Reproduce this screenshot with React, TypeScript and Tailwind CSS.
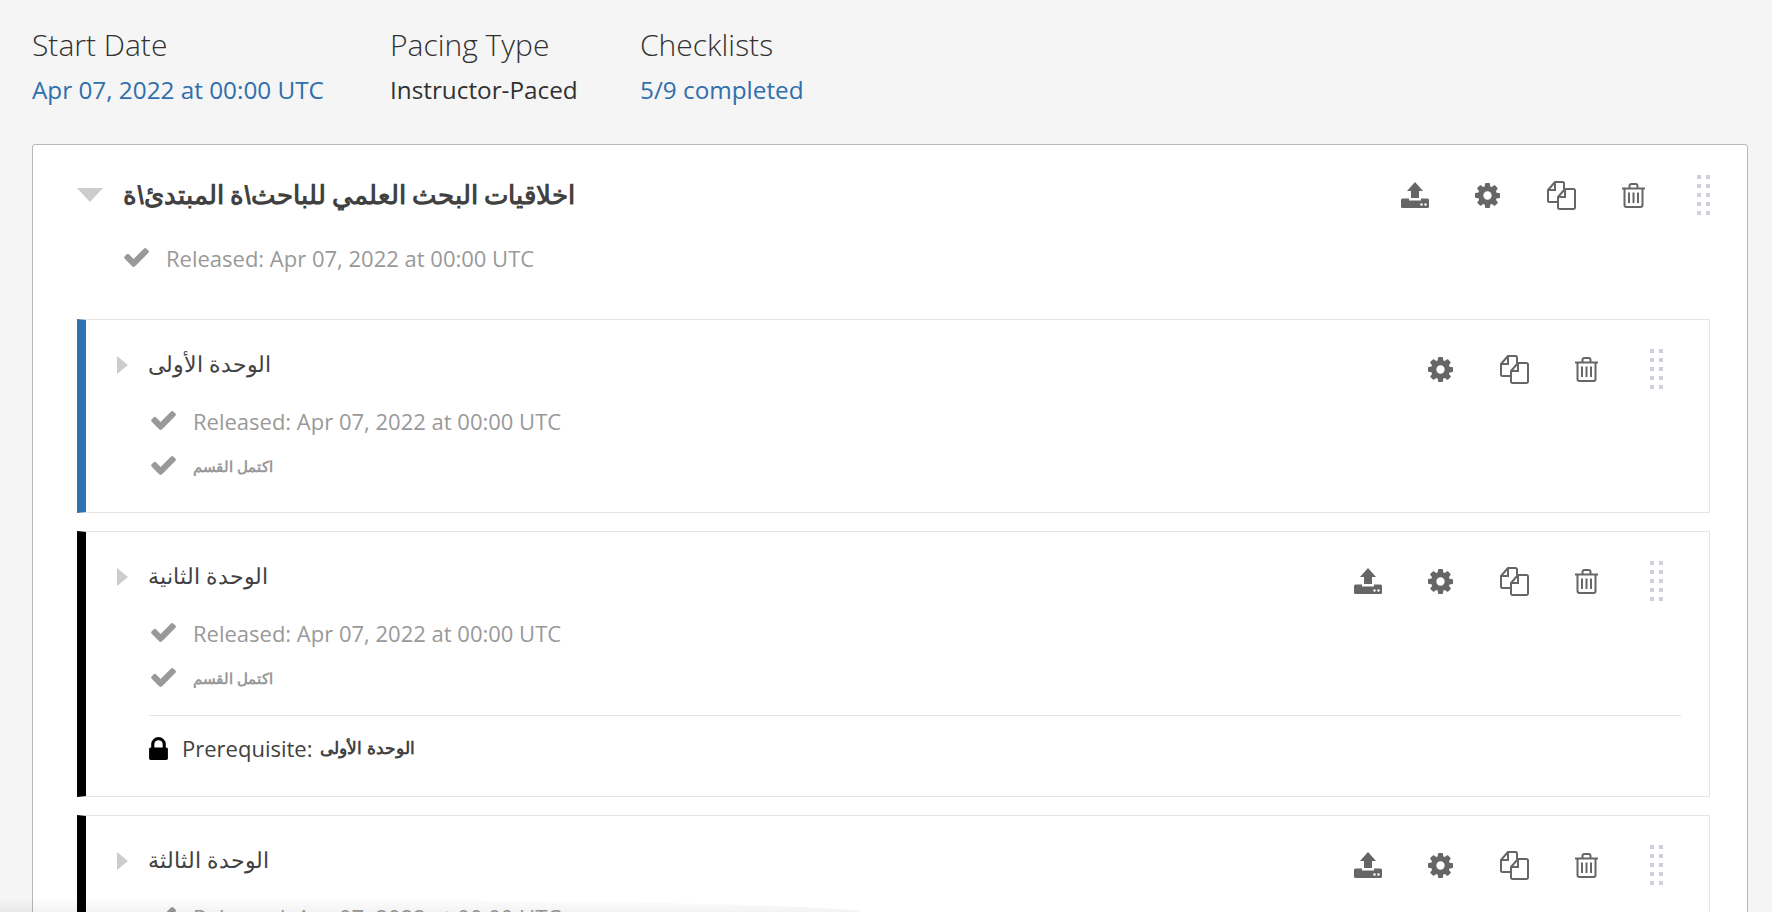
import React from "react";

const arabic = "font-['Liberation_Sans',sans-serif]";

const UploadIcon = () => (
  <svg viewBox="0 0 28 26" className="h-[26px] w-[28px] fill-[#666]">
    <path d="M14 0 L22 9 H18 V16 H10 V9 H6 Z" />
    <path d="M1.5 16.5 H8 V18.5 H20 V16.5 H26.5 A1.5 1.5 0 0 1 28 18 V24.5 A1.5 1.5 0 0 1 26.5 26 H1.5 A1.5 1.5 0 0 1 0 24.5 V18 A1.5 1.5 0 0 1 1.5 16.5 Z" />
    <circle cx="20.5" cy="22.5" r="1.2" fill="#fff" />
    <circle cx="24.5" cy="22.5" r="1.2" fill="#fff" />
  </svg>
);

const CogIcon = () => (
  <svg viewBox="128 128 1536 1536" className="h-[25px] w-[25px] fill-[#666]">
    <path d="M1152 896q0-106-75-181t-181-75-181 75-75 181 75 181 181 75 181-75 75-181zm512-109v222q0 12-8 23t-20 13l-185 28q-19 54-39 91 35 50 107 138 10 12 10 25t-9 23q-27 37-99 108t-94 71q-12 0-26-9l-138-108q-44 23-91 38-16 136-29 186-7 28-36 28h-222q-14 0-24.5-8.5t-11.5-21.5l-28-184q-49-16-90-37l-141 107q-10 9-25 9-14 0-25-11-126-114-165-168-7-10-7-23 0-12 8-23 15-21 51-66.5t54-70.5q-27-50-41-99l-183-27q-13-2-21-12.5t-8-23.5v-222q0-12 8-23t19-13l186-28q14-46 39-92-40-57-107-138-10-12-10-24 0-10 9-23 26-36 98.5-107.5t94.5-71.5q13 0 26 10l138 107q44-23 91-38 16-136 29-186 7-28 36-28h222q14 0 24.5 8.5t11.5 21.5l28 184q49 16 90 37l142-107q9-9 24-9 13 0 25 10 129 119 165 170 7 8 7 22 0 12-8 23-15 21-51 66.5t-54 70.5q26 50 41 98l183 28q13 2 21 12.5t8 23.5z" />
  </svg>
);

const CheckIcon = () => (
  <svg viewBox="121 334 1550 1188" className="mr-[17px] mb-[3px] h-[19px] w-[25px] fill-[#999]">
    <path d="M1671 566q0 40-28 68l-724 724-136 136q-28 28-68 28t-68-28l-136-136-362-362q-28-28-28-68t28-68l136-136q28-28 68-28t68 28l294 295 656-657q28-28 68-28t68 28l136 136q28 28 28 68z" />
  </svg>
);

const LockIcon = () => (
  <svg viewBox="320 128 1152 1408" className="mr-[14px] mb-[2px] h-[23px] w-[19px] fill-black">
    <path d="M640 768h512v-192q0-106-75-181t-181-75-181 75-75 181v192zm832 96v576q0 40-28 68t-68 28h-960q-40 0-68-28t-28-68v-576q0-40 28-68t68-28h32v-192q0-184 132-316t316-132 316 132 132 316v192h32q40 0 68 28t28 68z" />
  </svg>
);

const CopyIcon = () => (
  <svg viewBox="0 0 29 29" className="h-[29px] w-[29px] fill-none stroke-[#666] stroke-2">
    <path d="M11 21 H2.5 A1.5 1.5 0 0 1 1 19.5 V9 L8 1 H15.5 A1.5 1.5 0 0 1 17 2.5 V8" strokeLinejoin="round" />
    <path d="M8 2 V9 H2" />
    <path d="M18 8 H26.5 A1.5 1.5 0 0 1 28 9.5 V26.5 A1.5 1.5 0 0 1 26.5 28 H12.5 A1.5 1.5 0 0 1 11 26.5 V16 Z" fill="#fff" strokeLinejoin="round" />
    <path d="M18 9 V16 H12" />
  </svg>
);

const TrashIcon = () => (
  <svg viewBox="0 0 23 25" className="h-[25px] w-[23px] fill-none stroke-[#666] stroke-2">
    <path d="M0 5.5 H23" />
    <path d="M7.5 5 V3 A2 2 0 0 1 9.5 1 H13.5 A2 2 0 0 1 15.5 3 V5" />
    <path d="M2.5 5.5 V22 A2 2 0 0 0 4.5 24 H18.5 A2 2 0 0 0 20.5 22 V5.5" />
    <path d="M7 9.5 V20 M11.5 9.5 V20 M16 9.5 V20" />
  </svg>
);

const DragHandle = () => (
  <div className="grid w-[13px] grid-cols-2 gap-x-[5px] gap-y-[5px]">
    {Array.from({ length: 10 }).map((_, i) => (
      <span key={i} className="h-1 w-1 bg-[#cdd1da]" />
    ))}
  </div>
);

const Actions = ({ upload = true }: { upload?: boolean }) => (
  <div className="flex h-10 items-center">
    {upload && (
      <div className="mr-[46px]">
        <UploadIcon />
      </div>
    )}
    <CogIcon />
    <div className="ml-[47px]">
      <CopyIcon />
    </div>
    <div className="ml-[46px]">
      <TrashIcon />
    </div>
    <div className="ml-[52px]">
      <DragHandle />
    </div>
  </div>
);

const StatusRow = ({ children, className }: { children: React.ReactNode; className?: string }) => (
  <div className={`flex h-[30px] items-center text-[#999] ${className ?? ""}`}>
    <CheckIcon />
    {children}
  </div>
);

const Released = () => <span className="mb-[2px] text-[22px]">Released: Apr 07, 2022 at 00:00 UTC</span>;

const Unit = ({
  title,
  barClass,
  upload = true,
  prereq = false,
}: {
  title: string;
  barClass: string;
  upload?: boolean;
  prereq?: boolean;
}) => (
  <div className={`mb-[18px] border border-l-[9px] border-[#e4e4e4] bg-white pr-[28px] pl-[31px] ${barClass}`}>
    <div className="flex h-[87px] items-start justify-between pt-[27px] pr-[18px]">
      <div className="flex h-9 items-center">
        <span className="mr-[20px] h-0 w-0 border-y-[9px] border-l-[11px] border-y-transparent border-l-[#ccc]" />
        <span className={`${arabic} mb-[2px] text-[22px] text-[#414141]`}>{title}</span>
      </div>
      <div className="mt-[2px]">
        <Actions upload={upload} />
      </div>
    </div>
    <div className="pl-[32px]">
      <div className="pl-[2px]">
        <StatusRow>
          <Released />
        </StatusRow>
        <StatusRow className="mt-[15px]">
          <span className={`${arabic} text-[15px] font-bold`}>اكتمل القسم</span>
        </StatusRow>
      </div>
      {prereq ? (
        <div className="mt-[21px] flex items-center border-t border-[#e4e4e4] pt-[17px] pb-[31px] text-[22px] leading-[30px] text-[#414141]">
          <LockIcon />
          <span className="mb-[2px]">Prerequisite:</span>
          <span className={`${arabic} ml-[8px] text-[17px] font-bold`}>الوحدة الأولى</span>
        </div>
      ) : (
        <div className="h-[30px]" />
      )}
    </div>
  </div>
);

export default function App() {
  return (
    <div className="relative h-[912px] overflow-hidden bg-[#f5f5f5] pt-[24px] pr-[24px] pl-[32px] font-['Open_Sans',sans-serif]">
      <div className="flex h-[120px]">
        <div className="w-[358px]">
          <div className="text-[30px] leading-[42px] font-light text-[#313131]">Start Date</div>
          <div className="mt-[9px] text-[24.3px] leading-[30px] font-medium text-[#2f6fab]">Apr 07, 2022 at 00:00 UTC</div>
        </div>
        <div className="w-[250px]">
          <div className="text-[30px] leading-[42px] font-light text-[#313131]">Pacing Type</div>
          <div className="mt-[9px] text-[24.3px] leading-[30px] font-medium text-[#313131]">Instructor-Paced</div>
        </div>
        <div>
          <div className="text-[30px] leading-[42px] font-light text-[#313131]">Checklists</div>
          <div className="mt-[9px] text-[24.3px] leading-[30px] font-medium text-[#2f6fab]">5/9 completed</div>
        </div>
      </div>

      <div className="rounded-[3px] border border-[#b8b8b8] bg-white pt-[21px] pr-[37px] pl-[44px]">
        <div className="flex h-[58px] items-center justify-between">
          <div className="flex items-center">
            <span className="mr-[20px] h-0 w-0 border-x-[13px] border-t-[14px] border-x-transparent border-t-[#ccc]" />
            <span className={`${arabic} text-[26px] leading-[30px] font-bold [word-spacing:-1.4px] text-[#414141]`}>
              اخلاقيات البحث العلمي للباحث\ة المبتدئ\ة
            </span>
          </div>
          <Actions />
        </div>
        <div className="mt-[20px] mb-[45px] pl-[47px]">
          <StatusRow>
            <Released />
          </StatusRow>
        </div>
        <Unit title="الوحدة الأولى" barClass="border-l-[#2f73b0]" upload={false} />
        <Unit title="الوحدة الثانية" barClass="border-l-black" prereq />
        <Unit title="الوحدة الثالثة" barClass="border-l-black" />
      </div>

      <div className="absolute bottom-0 left-0 h-[14px] w-[860px] rounded-tr-[100%] bg-gradient-to-t from-black/5 to-transparent" />
    </div>
  );
}
